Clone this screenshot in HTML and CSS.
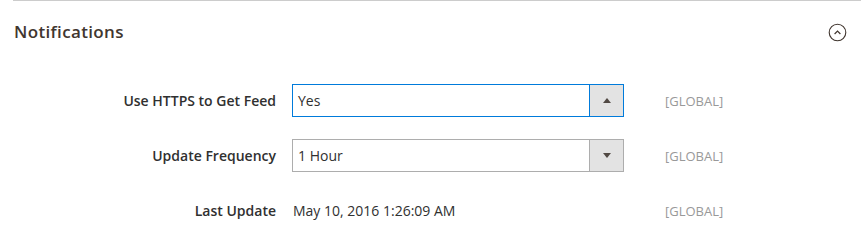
FILE: index.html
```html
<!DOCTYPE html>
<html lang="en">
<head>
  <meta charset="UTF-8" />
  <title>Notifications</title>
  <link rel="stylesheet" href="styles.css">
</head>
<body>
  <div class="section">
    <!-- Section header -->
    <div class="section-head">
      <h2 class="section-title">Notifications</h2>
      <span class="collapse-icon">
        <svg width="19" height="19" viewBox="0 0 19 19">
          <circle cx="9.5" cy="9.5" r="8.3" fill="none" stroke="#41362f" stroke-width="1.1"/>
          <path d="M6.6 11 L9.5 8.1 L12.4 11" fill="none" stroke="#41362f" stroke-width="1.2"/>
        </svg>
      </span>
    </div>

    <!-- Fields -->
    <div class="fields">
      <div class="field-label">Use HTTPS to Get Feed</div>
      <div class="select focused">
        <span class="select-value">Yes</span>
        <span class="select-btn"><span class="arrow up"></span></span>
      </div>
      <div class="scope">[GLOBAL]</div>

      <div class="field-label">Update Frequency</div>
      <div class="select">
        <span class="select-value">1 Hour</span>
        <span class="select-btn"><span class="arrow down"></span></span>
      </div>
      <div class="scope">[GLOBAL]</div>

      <div class="field-label">Last Update</div>
      <div class="field-text">May 10, 2016 1:26:09 AM</div>
      <div class="scope">[GLOBAL]</div>
    </div>
  </div>
</body>
</html>
```

FILE: styles.css
```css
body {
  margin: 0;
  padding: 0;
  font-family: "Open Sans", "Liberation Sans", sans-serif;
  color: #303030;
  background: #fff;
}

.section {
  margin-left: 13px;
  border-top: 1px solid #cccccc;
}

/* Header */
.section-head {
  display: flex;
  align-items: center;
  justify-content: space-between;
  margin-top: 21px;
  padding-left: 1px;
  padding-right: 14px;
}
.section-title {
  margin: 0;
  font-size: 17px;
  line-height: 20px;
  font-weight: 600;
  letter-spacing: 0.35px;
  color: #41362f;
}
.collapse-icon {
  display: flex;
  width: 19px;
  height: 19px;
}

/* Fields grid */
.fields {
  display: grid;
  grid-template-columns: 279px 332px auto;
  grid-auto-rows: 33px;
  row-gap: 22px;
  margin-top: 42px;
  align-items: center;
}
.field-label {
  text-align: right;
  padding-right: 16px;
  font-size: 14px;
  font-weight: 600;
  color: #303030;
}
.field-text {
  font-size: 14px;
  color: #303030;
  padding-left: 1px;
}
.scope {
  padding-left: 41px;
  font-size: 13px;
  color: #999999;
}

/* Fake select */
.select {
  box-sizing: border-box;
  width: 332px;
  height: 33px;
  display: flex;
  border: 1px solid #adadad;
  background: #fff;
}
.select.focused {
  border-color: #007bdb;
}
.select-value {
  flex: 1;
  padding-left: 5px;
  font-size: 14px;
  line-height: 31px;
  color: #303030;
}
.select-btn {
  width: 33px;
  display: flex;
  align-items: center;
  justify-content: center;
  background: #e3e3e3;
  border-left: 1px solid #adadad;
}
.select.focused .select-btn {
  border-left-color: #007bdb;
}
.arrow {
  width: 0;
  height: 0;
  border-left: 4px solid transparent;
  border-right: 4px solid transparent;
}
.arrow.up {
  border-bottom: 5px solid #514943;
}
.arrow.down {
  border-top: 5px solid #514943;
}
```
